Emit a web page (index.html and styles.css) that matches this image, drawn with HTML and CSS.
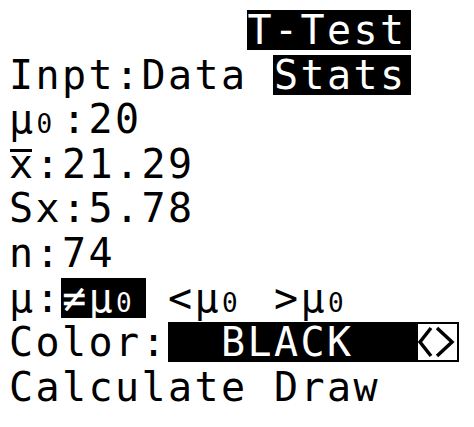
FILE: index.html
```html
<!DOCTYPE html>
<html lang="en">
<head>
<meta charset="utf-8">
<title>T-Test</title>
<link rel="stylesheet" href="styles.css">
</head>
<body>
<div class="screen">
<div class="row">         <span class="hl">T-Test</span></div>
<div class="row">Inpt:Data <span class="hl">Stats</span></div>
<div class="row">μ<span class="sub">0</span>:20</div>
<div class="row"><span class="xbar">x</span>:21.29</div>
<div class="row">Sx:5.78</div>
<div class="row">n:74</div>
<div class="row">μ:<span class="hl">≠μ<span class="sub">0</span></span> &lt;μ<span class="sub">0</span> &gt;μ<span class="sub">0</span></div>
<div class="row">Color:<span class="sel"><span class="fill">  BLACK</span><span class="arr"><svg viewBox="0 0 39 36" width="39" height="36"><path d="M13 4 L2 18 L13 32 M19 4 L34 18 L19 32" fill="none" stroke="#000" stroke-width="3.5" stroke-linejoin="miter"/></svg></span></span></div>
<div class="row">Calculate Draw</div>
</div>
</body>
</html>
```
FILE: styles.css
```css
html, body {
  margin: 0;
  padding: 0;
  background: #fff;
}
.screen {
  width: 474px;
  height: 427px;
  box-sizing: border-box;
  padding: 8px 0 0 9px;
  font-family: "DejaVu Sans Mono", "Liberation Mono", monospace;
  font-size: 40px;
  letter-spacing: 2.42px;
  color: #000;
  overflow: hidden;
}
.row {
  white-space: pre;
  line-height: 44.6px;
  height: 44.6px;
}
.hl {
  display: inline-block;
  height: 40px;
  line-height: 40px;
  background: #000;
  color: #fff;
  box-shadow: 4px 0 0 #000, -1px 0 0 #000;
}
.sub {
  display: inline-block;
  width: 26.5px;
  font-size: 26px;
  letter-spacing: 0;
  text-align: left;
  text-indent: 1px;
}
.xbar {
  background: linear-gradient(#000, #000) no-repeat;
  background-size: 22px 3px;
  background-position: 1px 8px;
}
.sel {
  display: inline-flex;
  height: 40px;
  vertical-align: baseline;
}
.fill {
  display: block;
  width: 248px;
  height: 40px;
  line-height: 40px;
  background: #000;
  color: #fff;
}
.arr {
  display: flex;
  align-items: center;
  justify-content: center;
  width: 39px;
  height: 36px;
  border: 2px solid #000;
  background: #fff;
}
.arr svg {
  display: block;
}
```
